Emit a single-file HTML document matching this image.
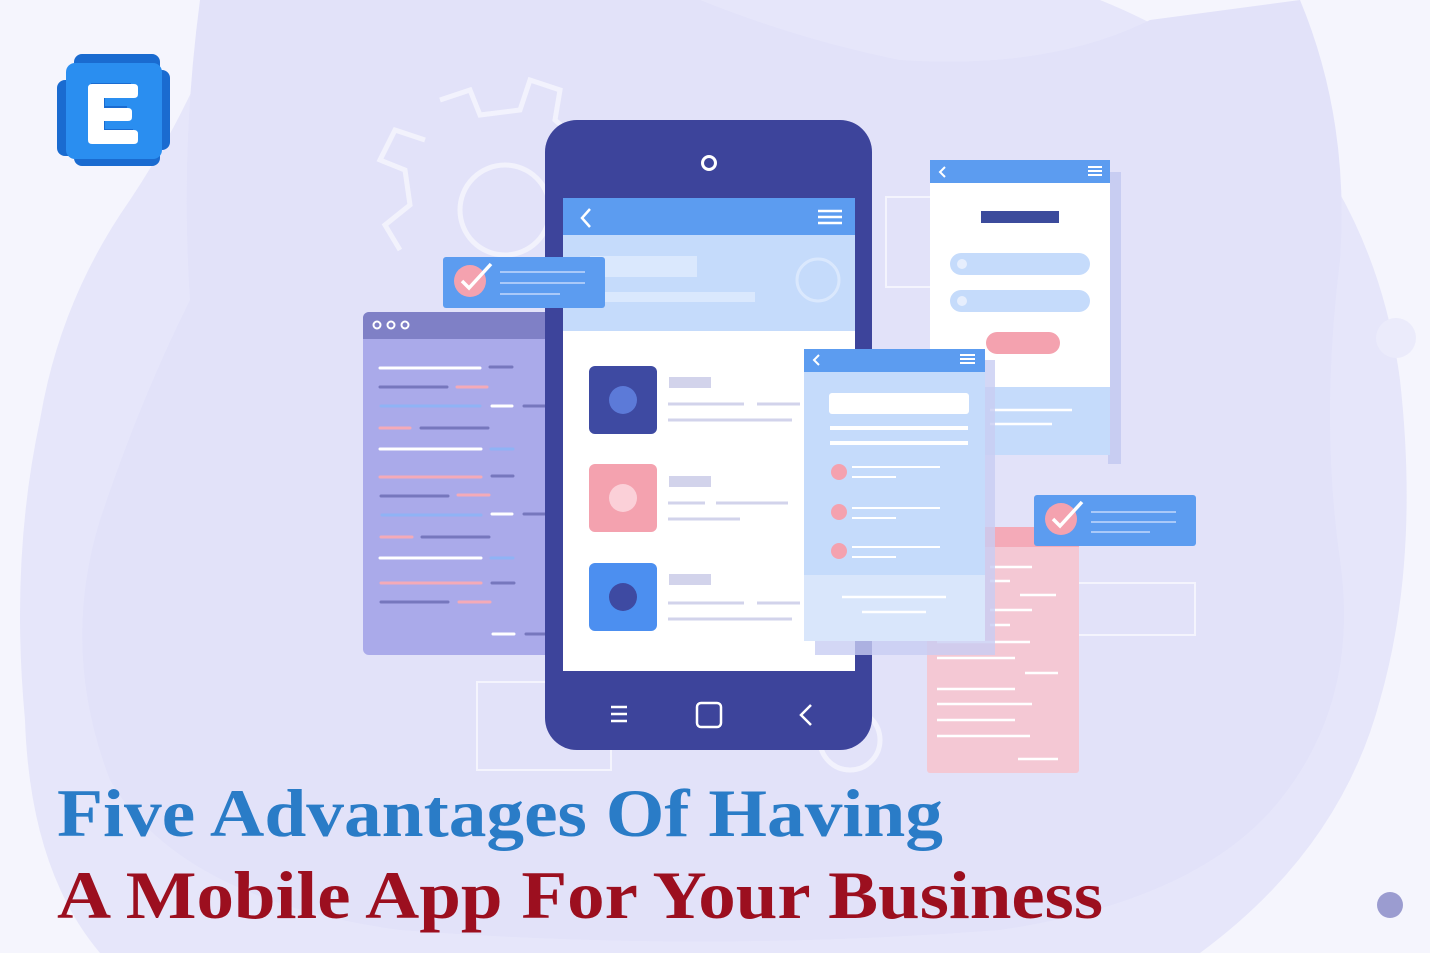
<!DOCTYPE html>
<html><head><meta charset="utf-8"><style>
html,body{margin:0;padding:0;width:1430px;height:953px;overflow:hidden;background:#f4f4fd}
svg{display:block}
</style></head><body>
<svg width="1430" height="953" viewBox="0 0 1430 953" xmlns="http://www.w3.org/2000/svg">
<rect width="1430" height="953" fill="#f5f5fd"/>
<path d="M230 0 L1100 0 Q1200 40 1290 120 Q1380 230 1400 380 Q1420 560 1380 700 Q1340 850 1200 953 L100 953 Q30 870 25 720 Q10 560 40 420 Q60 300 130 200 Q190 110 230 0Z" fill="#e6e6fa"/>
<path d="M200 0 L700 0 Q800 40 900 60 Q1050 70 1150 20 L1300 0 Q1350 120 1340 260 Q1320 420 1340 560 Q1360 700 1280 800 Q1200 900 1000 930 Q700 953 400 930 Q180 900 110 780 Q60 650 100 520 Q140 400 190 300 Q180 150 200 0Z" fill="#e2e2f9"/>
<circle cx="1396" cy="338" r="20" fill="#ebebfb"/>
<circle cx="1390" cy="905" r="13" fill="#9b9cd0"/>
<g fill="none" stroke="#f4f4fd" stroke-width="5" opacity="0.9">
<circle cx="505" cy="210" r="45"/>
<path d="M440 100 L470 90 L480 115 L520 110 L530 80 L560 90 L555 120 L590 150 L620 140 L630 170 L600 185 L600 230 L630 245 L615 275 L585 265 L555 295 L565 325 M400 250 L385 225 L410 205 L405 170 L380 160 L395 130 L425 140"/>
<circle cx="850" cy="740" r="30"/>
</g>
<rect x="886" y="197" width="50" height="90" fill="none" stroke="#f4f4fd" stroke-width="2"/>
<rect x="477" y="682" width="134" height="88" fill="none" stroke="#f4f4fd" stroke-width="2"/>
<rect x="1075" y="583" width="120" height="52" fill="none" stroke="#f4f4fd" stroke-width="2"/>
<rect x="363" y="312" width="200" height="343" rx="6" fill="#aaaaea"/>
<path d="M369 312 H563 V339 H363 V318 a6 6 0 0 1 6-6Z" fill="#7f80c6"/>
<g fill="none" stroke="#fff" stroke-width="2"><circle cx="377" cy="325" r="3.5"/><circle cx="391" cy="325" r="3.5"/><circle cx="405" cy="325" r="3.5"/></g>
<g stroke-width="3" stroke-linecap="round">
<path d="M380 368H480M380 449H481M380 558H481M492 406H512M492 514H512M493 634H514" stroke="#fff"/>
<path d="M490 367H512M380 387H447M421 428H488M492 476H513M381 496H448M422 537H489M492 583H514M381 602H448M524 406H545M524 514H545M526 634H545" stroke="#7677bd"/>
<path d="M457 387H487M380 428H410M380 477H481M458 495H489M381 537H412M381 583H481M459 602H490" stroke="#f4aab8"/>
<path d="M381 406H480M491 449H513M382 515H481M491 558H513" stroke="#8fb3f5"/>
</g>
<rect x="927" y="527" width="152" height="246" rx="3" fill="#f4c8d4"/>
<rect x="927" y="527" width="152" height="20" fill="#f4aab8"/>
<g stroke="#fff" stroke-width="2.5"><path d="M990 567H1032M990 581H1010M1020 595H1056M990 610H1032M990 625H1010M937 642H1030M937 658H1015M1025 673H1058M937 689H1015M937 704H1032M937 720H1015M937 736H1030M1018 759H1058"/></g>
<rect x="1108" y="172" width="13" height="292" fill="#c8cdf2"/>
<rect x="930" y="160" width="180" height="295" rx="4" fill="#fff"/>
<rect x="930" y="160" width="180" height="23" fill="#5c9cf0"/>
<path d="M945 167l-5 5 5 5" stroke="#fff" stroke-width="2" fill="none"/>
<path d="M1088 167h14M1088 171h14M1088 175h14" stroke="#fff" stroke-width="2"/>
<rect x="981" y="211" width="78" height="12" fill="#3c4b9c"/>
<rect x="950" y="253" width="140" height="22" rx="11" fill="#c5dbfb"/>
<rect x="950" y="290" width="140" height="22" rx="11" fill="#c5dbfb"/>
<circle cx="962" cy="264" r="5" fill="#e6eefd"/><circle cx="962" cy="301" r="5" fill="#e6eefd"/>
<rect x="986" y="332" width="74" height="22" rx="11" fill="#f4a2af"/>
<rect x="930" y="387" width="180" height="68" fill="#c5dbfb"/>
<path d="M990 410H1072M990 424H1052" stroke="#fff" stroke-width="2.5"/>
<rect x="545" y="120" width="327" height="630" rx="32" fill="#3d449b"/>
<circle cx="709" cy="163" r="6.5" fill="none" stroke="#fff" stroke-width="3"/>
<rect x="563" y="198" width="292" height="473" fill="#fff"/>
<rect x="563" y="198" width="292" height="37" fill="#5c9cf0"/>
<path d="M590 209l-8 9 8 9" stroke="#fff" stroke-width="2.5" fill="none"/>
<path d="M818 211h24M818 217h24M818 223h24" stroke="#fff" stroke-width="2.5"/>
<rect x="563" y="235" width="292" height="96" fill="#c5dbfb"/>
<rect x="590" y="256" width="107" height="21" fill="#dae8fd"/>
<rect x="590" y="292" width="165" height="10" fill="#dae8fd"/>
<circle cx="818" cy="280" r="21" fill="none" stroke="#dae8fd" stroke-width="3"/>
<rect x="589" y="366" width="68" height="68" rx="6" fill="#3e4aa2"/><circle cx="623" cy="400" r="14" fill="#5c7ad8"/>
<rect x="589" y="464" width="68" height="68" rx="6" fill="#f4a2af"/><circle cx="623" cy="498" r="14" fill="#fbd0d8"/>
<rect x="589" y="563" width="68" height="68" rx="6" fill="#4c8ff0"/><circle cx="623" cy="597" r="14" fill="#3e4aa2"/>
<g fill="#d2d3eb"><rect x="669" y="377" width="42" height="11"/><rect x="669" y="476" width="42" height="11"/><rect x="669" y="574" width="42" height="11"/></g>
<g stroke="#d2d3eb" stroke-width="3"><path d="M668 404H744M757 404H800M668 420H792M668 503H705M716 503H788M668 519H740M668 603H744M757 603H800M668 619H792"/></g>
<path d="M611 707h16M611 714h16M611 721h16" stroke="#fff" stroke-width="2.5"/>
<rect x="697" y="703" width="24" height="24" rx="4" fill="none" stroke="#fff" stroke-width="2.5"/>
<path d="M811 705l-10 10 10 10" stroke="#fff" stroke-width="2.5" fill="none"/>
<rect x="815" y="360" width="180" height="295" fill="#c8cdf2" opacity="0.8"/>
<rect x="804" y="349" width="181" height="292" rx="3" fill="#c5dbfb"/>
<rect x="804" y="349" width="181" height="23" fill="#5c9cf0"/>
<path d="M819 355l-5 5 5 5" stroke="#fff" stroke-width="2" fill="none"/>
<path d="M960 355h15M960 359h15M960 363h15" stroke="#fff" stroke-width="2"/>
<rect x="829" y="393" width="140" height="21" rx="3" fill="#fff"/>
<path d="M830 428H968M830 443H968" stroke="#fff" stroke-width="4"/>
<g fill="#f4a2af"><circle cx="839" cy="472" r="8"/><circle cx="839" cy="512" r="8"/><circle cx="839" cy="551" r="8"/></g>
<path d="M852 467H940M852 477H896M852 508H940M852 518H896M852 547H940M852 557H896" stroke="#fff" stroke-width="2"/>
<rect x="804" y="575" width="181" height="66" fill="#d9e6fb"/>
<path d="M842 597H946M862 612H926" stroke="#fff" stroke-width="2.5"/>
<rect x="443" y="257" width="162" height="51" rx="3" fill="#5c9cf0"/>
<circle cx="470" cy="281" r="16" fill="#f4a2af"/>
<path d="M462 281l7 7 22-24" stroke="#fff" stroke-width="3.5" fill="none"/>
<path d="M500 272H585M500 283H585M500 294H560" stroke="#a9c9f9" stroke-width="2"/>
<rect x="1034" y="495" width="162" height="51" rx="3" fill="#5c9cf0"/>
<circle cx="1061" cy="519" r="16" fill="#f4a2af"/>
<path d="M1053 519l7 7 22-24" stroke="#fff" stroke-width="3.5" fill="none"/>
<path d="M1091 512H1176M1091 522H1176M1091 532H1150" stroke="#a9c9f9" stroke-width="2"/>
<!-- logo -->
<rect x="74" y="54" width="86" height="20" rx="8" fill="#1a6bd0"/>
<rect x="150" y="70" width="20" height="80" rx="8" fill="#1a6bd0"/>
<rect x="57" y="80" width="20" height="76" rx="8" fill="#1a6bd0"/>
<rect x="74" y="146" width="86" height="20" rx="8" fill="#1a6bd0"/>
<rect x="66" y="63" width="96" height="96" rx="9" fill="#2a8ef0"/>
<path d="M94 86 H134 V98 H108 V109 H130 V121 H108 V132 H136 V144 H94Z" fill="#1a6bd0" transform="translate(-3,-3)"/>
<path d="M92 84 Q88 84 88 88 V140 Q88 144 92 144 H134 Q138 144 138 140 V134 Q138 130 134 130 H104 V121 H128 Q132 121 132 117 V112 Q132 108 128 108 H104 V98 H134 Q138 98 138 94 V88 Q138 84 134 84Z" fill="#fff"/>
<text x="57" y="836" font-family="'Liberation Serif',serif" font-weight="bold" font-size="68" fill="#2a7cc7" textLength="886" lengthAdjust="spacingAndGlyphs">Five Advantages Of Having</text>
<text x="57" y="918" font-family="'Liberation Serif',serif" font-weight="bold" font-size="68" fill="#9c0f1f" textLength="1046" lengthAdjust="spacingAndGlyphs">A Mobile App For Your Business</text>
</svg>
</body></html>
